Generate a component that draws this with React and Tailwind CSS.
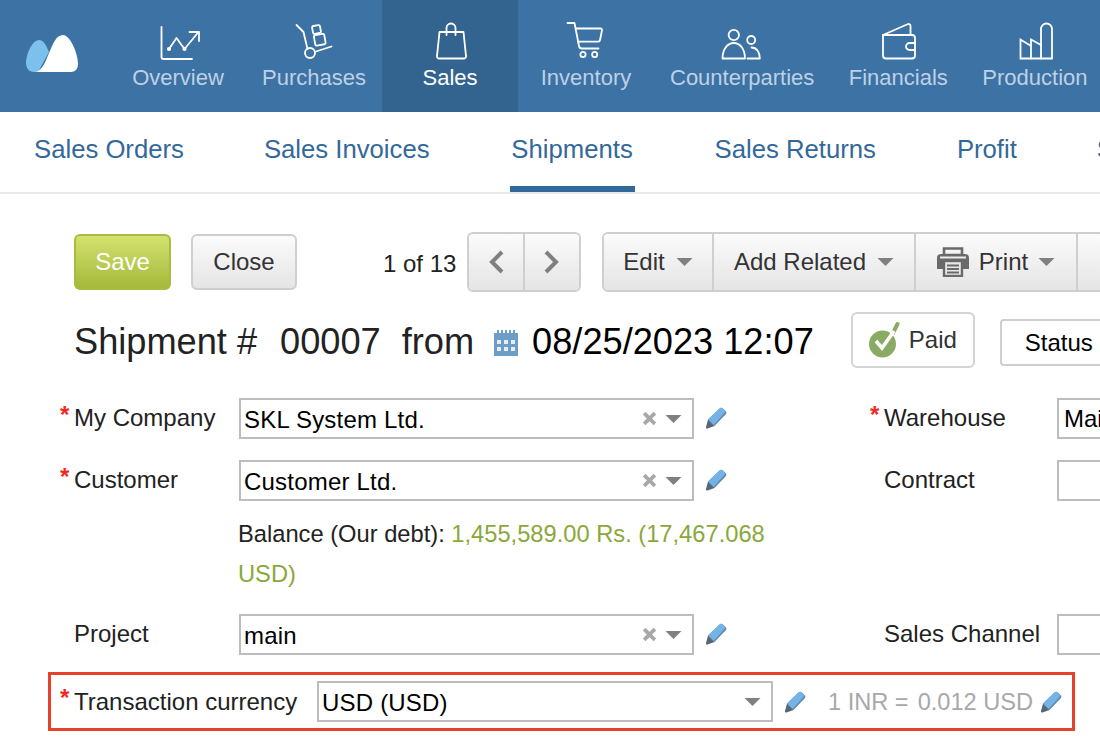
import React from 'react';

const NavIcon = ({ children }) => (
  <svg viewBox="0 0 60 40" className="w-[60px] h-[40px] overflow-visible" fill="none" stroke="#fff" strokeWidth="1.8" strokeLinecap="round" strokeLinejoin="round">
    {children}
  </svg>
);

const navItems = [
  {
    label: 'Overview',
    icon: (
      <>
        <path d="M13.5 7V37a2 2 0 0 0 2 2H44" />
        <path d="M21 29L28.5 18L36.5 29L50.5 12" />
        <path d="M41.5 12H51V21" />
        <circle cx="21" cy="29" r="1.2" fill="#fff" />
        <circle cx="36.5" cy="29" r="1.2" fill="#fff" />
      </>
    ),
  },
  {
    label: 'Purchases',
    icon: (
      <>
        <path d="M12.5 5L19.5 12L23.5 29" />
        <circle cx="26" cy="33" r="5" />
        <path d="M32 31.5L47.5 26.5" />
        <rect x="30.5" y="14.5" width="10.5" height="10.5" rx="1.5" transform="rotate(-10 35.7 19.7)" />
        <rect x="28.5" y="5.5" width="8" height="8" rx="1.5" transform="rotate(-10 32.5 9.5)" />
      </>
    ),
  },
  {
    label: 'Sales',
    active: true,
    icon: (
      <>
        <path d="M19.5 12H43.5L46 36a2 2 0 0 1-2 2.5H19a2 2 0 0 1-2-2.5Z" />
        <path d="M26.5 15V8a4.5 4.5 0 0 1 9 0V15" />
      </>
    ),
  },
  {
    label: 'Inventory',
    icon: (
      <>
        <path d="M11.5 3H18.5L23 26a3 3 0 0 0 3 2.5H42.5" />
        <path d="M20 8.5H44.5a1.5 1.5 0 0 1 1.5 1.8L44 20a2 2 0 0 1-2 1.7H22" />
        <circle cx="27" cy="34.5" r="2.6" />
        <circle cx="38.7" cy="34.5" r="2.6" />
      </>
    ),
  },
  {
    label: 'Counterparties',
    icon: (
      <>
        <circle cx="21.8" cy="15" r="5.2" />
        <path d="M10.5 38.5C10.5 29 15.5 23 21.8 23S33 29 33 38.5Z" />
        <circle cx="39.2" cy="20" r="4" />
        <path d="M35.5 38.5H47.8C47.8 32 44.5 27.5 39.5 27.5" />
      </>
    ),
  },
  {
    label: 'Financials',
    icon: (
      <>
        <path d="M15 15L39.5 4.2a2 2 0 0 1 3 1.8V15" />
        <path d="M15 15H44a3 3 0 0 1 3 3V35.5a3 3 0 0 1-3 3H18a3 3 0 0 1-3-3Z" />
        <path d="M47 23H41.5a3.5 3.5 0 0 0 0 7H47" />
      </>
    ),
  },
  {
    label: 'Production',
    icon: (
      <>
        <path d="M15.5 38.5V19.5L26 26V19.5L36 25V38.5Z" strokeLinejoin="miter" />
        <path d="M26 26V38.5" />
        <path d="M36 25V9a5.5 5.5 0 0 1 11 0V38.5H36" strokeLinejoin="miter" />
      </>
    ),
  },
];

const tabs = ['Sales Orders', 'Sales Invoices', 'Shipments', 'Sales Returns', 'Profit', 'S'];

const Caret = ({ className = '' }) => (
  <svg viewBox="0 0 16 8" className={`w-[17px] h-[8px] shrink-0 ${className}`}>
    <path d="M0 0H16L8 8Z" fill="#808080" />
  </svg>
);

const Pencil = ({ className = '' }) => (
  <svg viewBox="0 0 22 22" className={`w-[22px] h-[22px] shrink-0 ${className}`}>
    <path d="M3 12.5L14.5 1.5a2.4 2.4 0 0 1 3.4 0L20.5 4a2.4 2.4 0 0 1 0 3.4L9.5 19Z" fill="#5f89ad" />
    <path d="M3 12.5L14.5 1.5a2.4 2.4 0 0 1 3.4 0L19.4 3a2.2 2.2 0 0 1 0 3.1L8.6 18Z" fill="#74b3e6" />
    <path d="M3 12.5L9.5 19L2.5 21.5A1.2 1.2 0 0 1 1 20Z" fill="#566878" />
  </svg>
);

const Star = ({ on = false }) => (
  <span className="w-[14px] shrink-0 mb-[8px] text-[#f0281e] text-[24px] font-bold leading-none">{on ? '*' : ''}</span>
);

const Select = ({ value, clearable = true, width = 'w-[455px]' }) => (
  <div className={`${width} h-[41px] shrink-0 border-2 border-[#bdbdbd] bg-white flex items-center pl-[3px] pr-[10px]`}>
    <span className="flex-1 mt-[2px] text-black tracking-[0.2px]">{value}</span>
    {clearable && (
      <svg viewBox="0 0 14 14" className="w-[15px] h-[15px] mr-[8px]">
        <path d="M2 2L12 12M12 2L2 12" stroke="#a8a8a8" strokeWidth="3.4" />
      </svg>
    )}
    <Caret className="mt-[1px]" />
  </div>
);

const Field = ({ label, required, value, clearable }) => (
  <div className="w-[810px] shrink-0 flex items-center">
    <Star on={required} />
    <span className="w-[165px] mb-[2px] text-[#222]">{label}</span>
    <Select value={value} clearable={clearable} />
    <Pencil className="ml-[11px] mb-[1px]" />
  </div>
);

const SideField = ({ label, required, value }) => (
  <div className="flex items-center shrink-0">
    <Star on={required} />
    <span className="w-[173px] mb-[2px] text-[#222]">{label}</span>
    <div className="w-[300px] h-[41px] border-2 border-[#bdbdbd] pl-[5px] flex items-center text-black">{value}</div>
  </div>
);

const btn = 'h-[56px] shrink-0 flex items-center justify-center bg-gradient-to-b from-[#fbfbfb] to-[#e5e5e5] text-[#333]';

export default function App() {
  return (
    <div className="w-[1100px] h-[746px] overflow-hidden bg-white text-[24px] font-['Liberation_Sans',Arial,sans-serif]">
      <nav className="h-[112px] bg-[#3d72a4] flex">
        <div className="w-[110px] shrink-0 pl-[26px] pt-[35px]">
          <svg viewBox="0 0 52 37" className="w-[52px] h-[37px]">
            <path d="M0 28C0 20 6 5 13 5C18 5 20 10 23 17L12 37H8C3 37 0 33 0 28Z" fill="#7cc0ee" />
            <path d="M10 37C16 35 19 28 23 18C27 9 30 0 37 0C44 0 52 18 52 29C52 34 49 37 45 37Z" fill="#fff" />
          </svg>
        </div>
        {navItems.map((item) => (
          <div
            key={item.label}
            className={`min-w-[136px] shrink-0 px-[16px] pt-[20px] flex flex-col items-center ${item.active ? 'bg-[#33648f] text-white' : 'text-[#bdd1e5]'}`}
          >
            <NavIcon>{item.icon}</NavIcon>
            <span className="text-[22px] leading-[36px] whitespace-nowrap">{item.label}</span>
          </div>
        ))}
      </nav>

      <div className="h-[82px] border-b-2 border-[#e8e8e8] pl-[34px] flex gap-[80px] text-[25.7px] text-[#33689a]">
        {tabs.map((tab) => (
          <div
            key={tab}
            className={`h-[80px] shrink-0 pt-[20px] leading-[34px] whitespace-nowrap ${tab === 'Shipments' ? 'w-[125px] border-b-[6px] border-[#33689a] text-center' : ''} ${tab === 'Profit' ? 'ml-[1px]' : ''}`}
          >
            {tab}
          </div>
        ))}
      </div>

      <div className="pt-[38px]">
        <div className="pl-[74px] flex items-center whitespace-nowrap">
          <div className="w-[97px] h-[56px] shrink-0 rounded-[6px] border-2 border-[#a9bc3f] bg-gradient-to-b from-[#d3e26e] to-[#a5b93a] text-white flex items-center justify-center">
            Save
          </div>
          <div className={`${btn} ml-[20px] w-[106px] rounded-[6px] border-2 border-[#cfcfcf]`}>Close</div>
          <span className="ml-[86px] mt-[3px] text-[#222] w-[73px] shrink-0">1 of 13</span>
          <div className="ml-[11px] shrink-0 flex rounded-[6px] border-2 border-[#cfcfcf] overflow-hidden">
            <div className={`${btn} h-[52px] w-[56px] border-r-2 border-[#cfcfcf]`}>
              <svg viewBox="0 0 16 24" className="w-[16px] h-[24px]">
                <path d="M14 2L4 12L14 22" fill="none" stroke="#808080" strokeWidth="4" />
              </svg>
            </div>
            <div className={`${btn} h-[52px] w-[54px]`}>
              <svg viewBox="0 0 16 24" className="w-[16px] h-[24px]">
                <path d="M2 2L12 12L2 22" fill="none" stroke="#808080" strokeWidth="4" />
              </svg>
            </div>
          </div>
          <div className="ml-[21px] flex rounded-[6px] border-2 border-[#cfcfcf] shrink-0">
            <div className={`${btn} h-[52px] w-[110px] border-r-2 border-[#cfcfcf] gap-[11px] rounded-l-[4px]`}>
              Edit <Caret />
            </div>
            <div className={`${btn} h-[52px] w-[202px] border-r-2 border-[#cfcfcf] gap-[11px]`}>
              Add Related <Caret />
            </div>
            <div className={`${btn} h-[52px] w-[162px] border-r-2 border-[#cfcfcf] gap-[10px]`}>
              <svg viewBox="0 0 32 30" className="w-[32px] h-[30px]">
                <path d="M7 1.5H25V8H7Z" fill="none" stroke="#6a6a6a" strokeWidth="2.6" />
                <path d="M4 7H28a4 4 0 0 1 4 4V22H26V14H6V22H0V11a4 4 0 0 1 4-4Z" fill="#6a6a6a" />
                <path d="M3 10.5H29" stroke="#ececec" strokeWidth="2" />
                <rect x="7" y="14" width="18" height="15" fill="#e8e8e8" stroke="#6a6a6a" strokeWidth="2.4" />
                <path d="M10 18.5H22M10 22H22M10 25.5H22" stroke="#6a6a6a" strokeWidth="1.8" />
              </svg>
              Print <Caret />
            </div>
            <div className={`${btn} h-[52px] w-[60px]`} />
          </div>
        </div>

        <div className="mt-[20px] pl-[74px] h-[56px] flex items-center whitespace-nowrap text-[36.2px] text-[#222]">
          <span className="mt-[5px]">Shipment #</span>
          <span className="ml-[23px] mt-[5px]">00007</span>
          <span className="ml-[21px] mt-[5px]">from</span>
          <svg viewBox="0 0 24 26" className="ml-[20px] mt-[5px] w-[24px] h-[26px] shrink-0">
            <path d="M0 3H24V26H0Z" fill="#6d9cc7" />
            <path d="M4 0V6M8 0V6M12 0V6M16 0V6M20 0V6" stroke="#6d9cc7" strokeWidth="2" />
            <path d="M3 10H7V14H3ZM10 10H14V14H10ZM17 10H21V14H17ZM3 17H7V21H3ZM10 17H14V21H10ZM17 17H21V21H17Z" fill="#e4eef7" />
          </svg>
          <span className="ml-[14px] mt-[5px] text-black">08/25/2023 12:07</span>
          <div className="ml-[37px] w-[124px] h-[56px] shrink-0 rounded-[6px] border-2 border-[#d4d4d4] flex items-center pl-[16px] text-[24px] text-[#333]">
            <svg viewBox="0 0 32 36" className="w-[32px] h-[36px] mr-[8px] shrink-0">
              <circle cx="13.5" cy="22" r="13.5" fill="#8aab63" />
              <path d="M24 11L28.5 2" fill="none" stroke="#8aab63" strokeWidth="4" strokeLinecap="round" />
              <path d="M7 19L13 26L25 9" fill="none" stroke="#fff" strokeWidth="3.6" />
            </svg>
            Paid
          </div>
          <div className="ml-[25px] mt-[5px] w-[140px] h-[47px] shrink-0 rounded-[4px] border-2 border-[#cfcfcf] pl-[23px] flex items-center text-[24px] text-black">
            Status
          </div>
        </div>

        <div className="mt-[30px] pl-[60px] flex whitespace-nowrap">
          <Field label="My Company" required value="SKL System Ltd." />
          <SideField label="Warehouse" required value="Main" />
        </div>
        <div className="mt-[21px] pl-[60px] flex whitespace-nowrap">
          <Field label="Customer" required value="Customer Ltd." />
          <SideField label="Contract" />
        </div>
        <div className="mt-[13px] ml-[238px] w-[540px] text-[23.7px] leading-[40px] text-[#222]">
          Balance (Our debt): <span className="text-[#8aa83a]">1,455,589.00 Rs. (17,467.068 USD)</span>
        </div>
        <div className="mt-[20px] pl-[60px] flex whitespace-nowrap">
          <Field label="Project" value="main" />
          <SideField label="Sales Channel" />
        </div>

        <div className="mt-[17px] ml-[48px] w-[1027px] h-[59px] border-[3px] border-[#e8412a] pl-[9px] flex items-center whitespace-nowrap">
          <Star on />
          <span className="w-[243px] text-[#222]">Transaction currency</span>
          <Select value="USD (USD)" clearable={false} width="w-[456px]" />
          <Pencil className="ml-[11px]" />
          <span className="ml-[22px] mt-[3px] text-[23.6px] text-[#a8a8a8]">1 INR = </span>
          <span className="ml-[9px] mt-[3px] text-[23.6px] text-[#a8a8a8]">0.012 USD</span>
          <Pencil className="ml-[7px]" />
        </div>
      </div>
    </div>
  );
}
